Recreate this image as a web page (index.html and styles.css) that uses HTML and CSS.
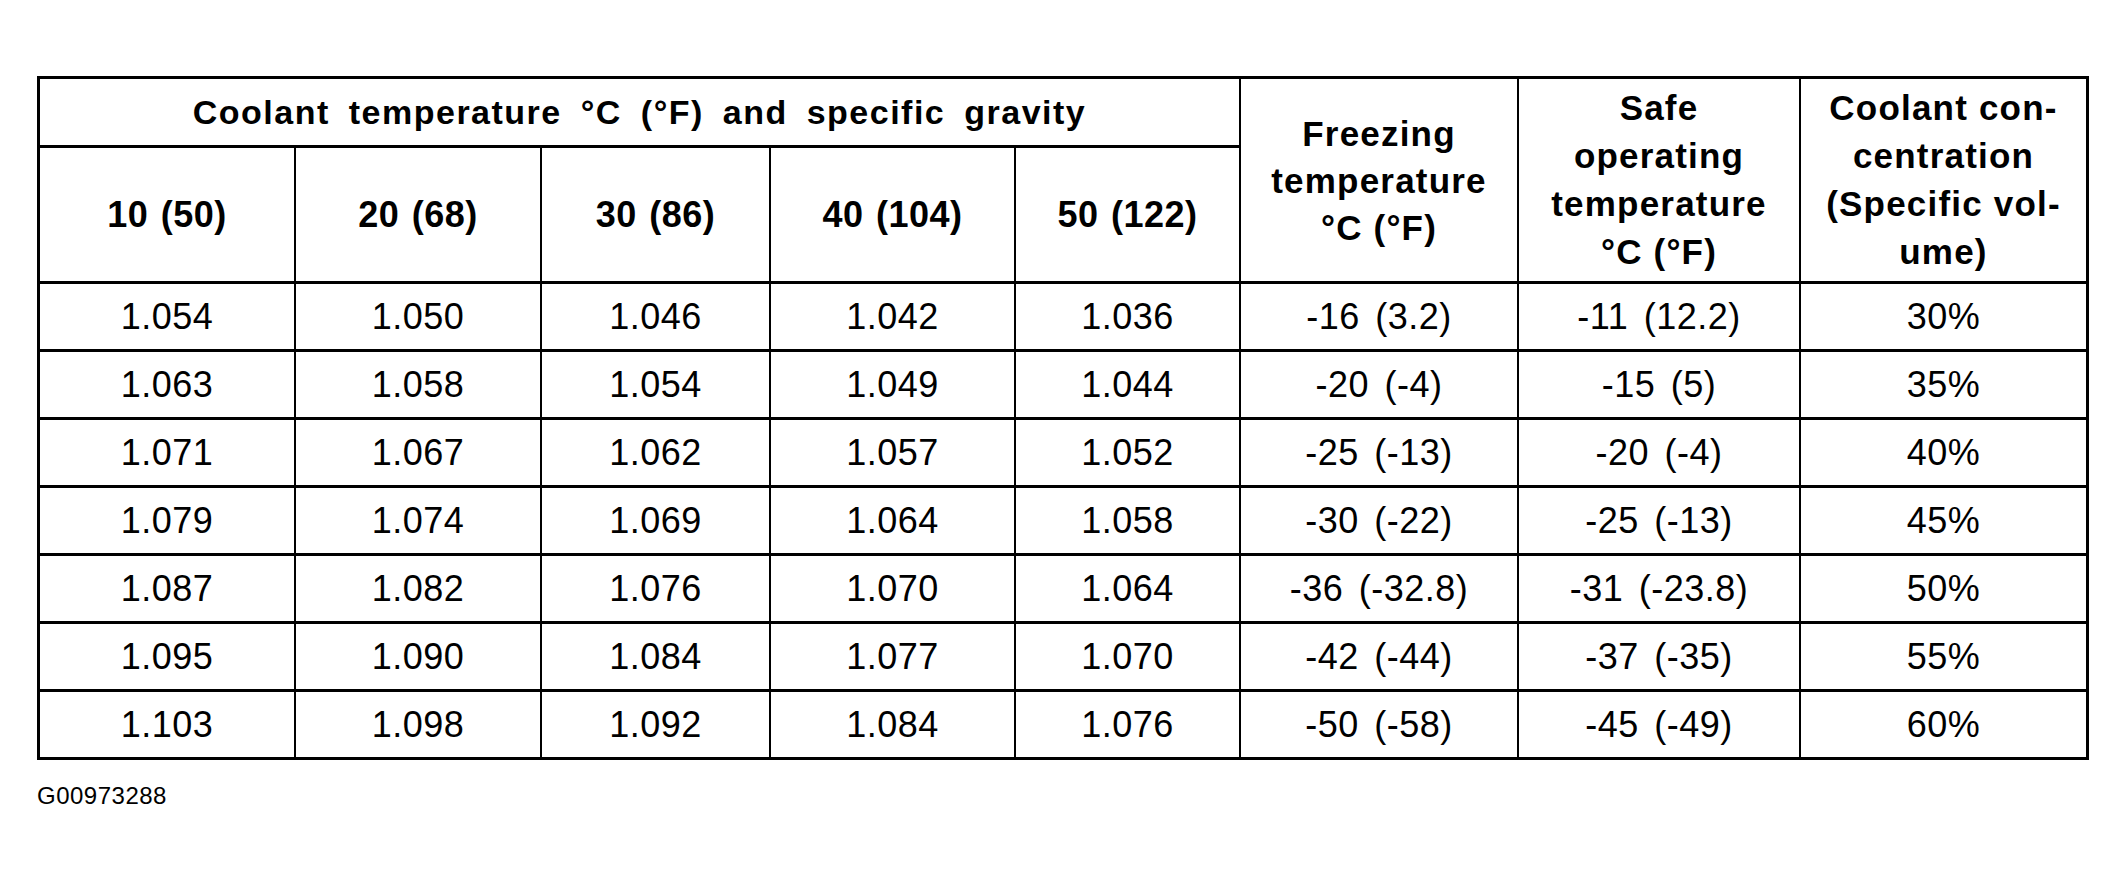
FILE: index.html
```html
<!DOCTYPE html>
<html lang="en">
<head>
<meta charset="utf-8">
<title>Coolant specific gravity table</title>
<link rel="stylesheet" href="styles.css">
</head>
<body>
<div class="page">
  <div class="grid">
    <div class="cell head span5">Coolant temperature °C (°F) and specific gravity</div>
    <div class="cell head tall c6">Freezing<br>temperature<br>°C (°F)</div>
    <div class="cell head tall c7">Safe<br>operating<br>temperature<br>°C (°F)</div>
    <div class="cell head tall c8">Coolant con-<br>centration<br>(Specific vol-<br>ume)</div>
    <div class="cell num">10 (50)</div>
    <div class="cell num">20 (68)</div>
    <div class="cell num">30 (86)</div>
    <div class="cell num">40 (104)</div>
    <div class="cell num">50 (122)</div>

    <div class="cell">1.054</div><div class="cell">1.050</div><div class="cell">1.046</div><div class="cell">1.042</div><div class="cell">1.036</div><div class="cell">-16 (3.2)</div><div class="cell">-11 (12.2)</div><div class="cell">30%</div>
    <div class="cell">1.063</div><div class="cell">1.058</div><div class="cell">1.054</div><div class="cell">1.049</div><div class="cell">1.044</div><div class="cell">-20 (-4)</div><div class="cell">-15 (5)</div><div class="cell">35%</div>
    <div class="cell">1.071</div><div class="cell">1.067</div><div class="cell">1.062</div><div class="cell">1.057</div><div class="cell">1.052</div><div class="cell">-25 (-13)</div><div class="cell">-20 (-4)</div><div class="cell">40%</div>
    <div class="cell">1.079</div><div class="cell">1.074</div><div class="cell">1.069</div><div class="cell">1.064</div><div class="cell">1.058</div><div class="cell">-30 (-22)</div><div class="cell">-25 (-13)</div><div class="cell">45%</div>
    <div class="cell">1.087</div><div class="cell">1.082</div><div class="cell">1.076</div><div class="cell">1.070</div><div class="cell">1.064</div><div class="cell">-36 (-32.8)</div><div class="cell">-31 (-23.8)</div><div class="cell">50%</div>
    <div class="cell">1.095</div><div class="cell">1.090</div><div class="cell">1.084</div><div class="cell">1.077</div><div class="cell">1.070</div><div class="cell">-42 (-44)</div><div class="cell">-37 (-35)</div><div class="cell">55%</div>
    <div class="cell">1.103</div><div class="cell">1.098</div><div class="cell">1.092</div><div class="cell">1.084</div><div class="cell">1.076</div><div class="cell">-50 (-58)</div><div class="cell">-45 (-49)</div><div class="cell">60%</div>
  </div>
  <div class="label">G00973288</div>
</div>
</body>
</html>
```

FILE: styles.css
```css
html, body {
  margin: 0;
  padding: 0;
  background: #fff;
}

body {
  font-family: "Liberation Sans", Arial, Helvetica, sans-serif;
  color: #000;
}

.page {
  padding: 76px 0 0 37px;
}

.grid {
  display: grid;
  width: 2052px;
  box-sizing: border-box;
  background: #000;
  padding: 3px;
  column-gap: 2px;
  row-gap: 3px;
  grid-template-columns: 254px 244px 227px 243px 223px 276px 280px 285px;
  grid-template-rows: 66px 133px repeat(7, 65px);
}

.cell {
  background: #fff;
  display: flex;
  align-items: center;
  justify-content: center;
  text-align: center;
  font-size: 36px;
  letter-spacing: 0.5px;
  word-spacing: 5px;
}

.head {
  font-weight: bold;
  font-size: 35px;
  letter-spacing: 1.2px;
  word-spacing: 0;
  line-height: 47px;
}

.span5 {
  grid-column: 1 / span 5;
  font-size: 34px;
  letter-spacing: 1.5px;
  word-spacing: 8px;
}

.tall {
  grid-row: 1 / span 2;
}

.c6 { grid-column: 6; }
.c7 { grid-column: 7; line-height: 48px; }
.c8 { grid-column: 8; line-height: 48px; }

.num {
  font-weight: bold;
  font-size: 36px;
  letter-spacing: 0.5px;
  word-spacing: 2px;
}

.label {
  margin-top: 22px;
  font-size: 24px;
  line-height: 28px;
  letter-spacing: 0.5px;
}
```
